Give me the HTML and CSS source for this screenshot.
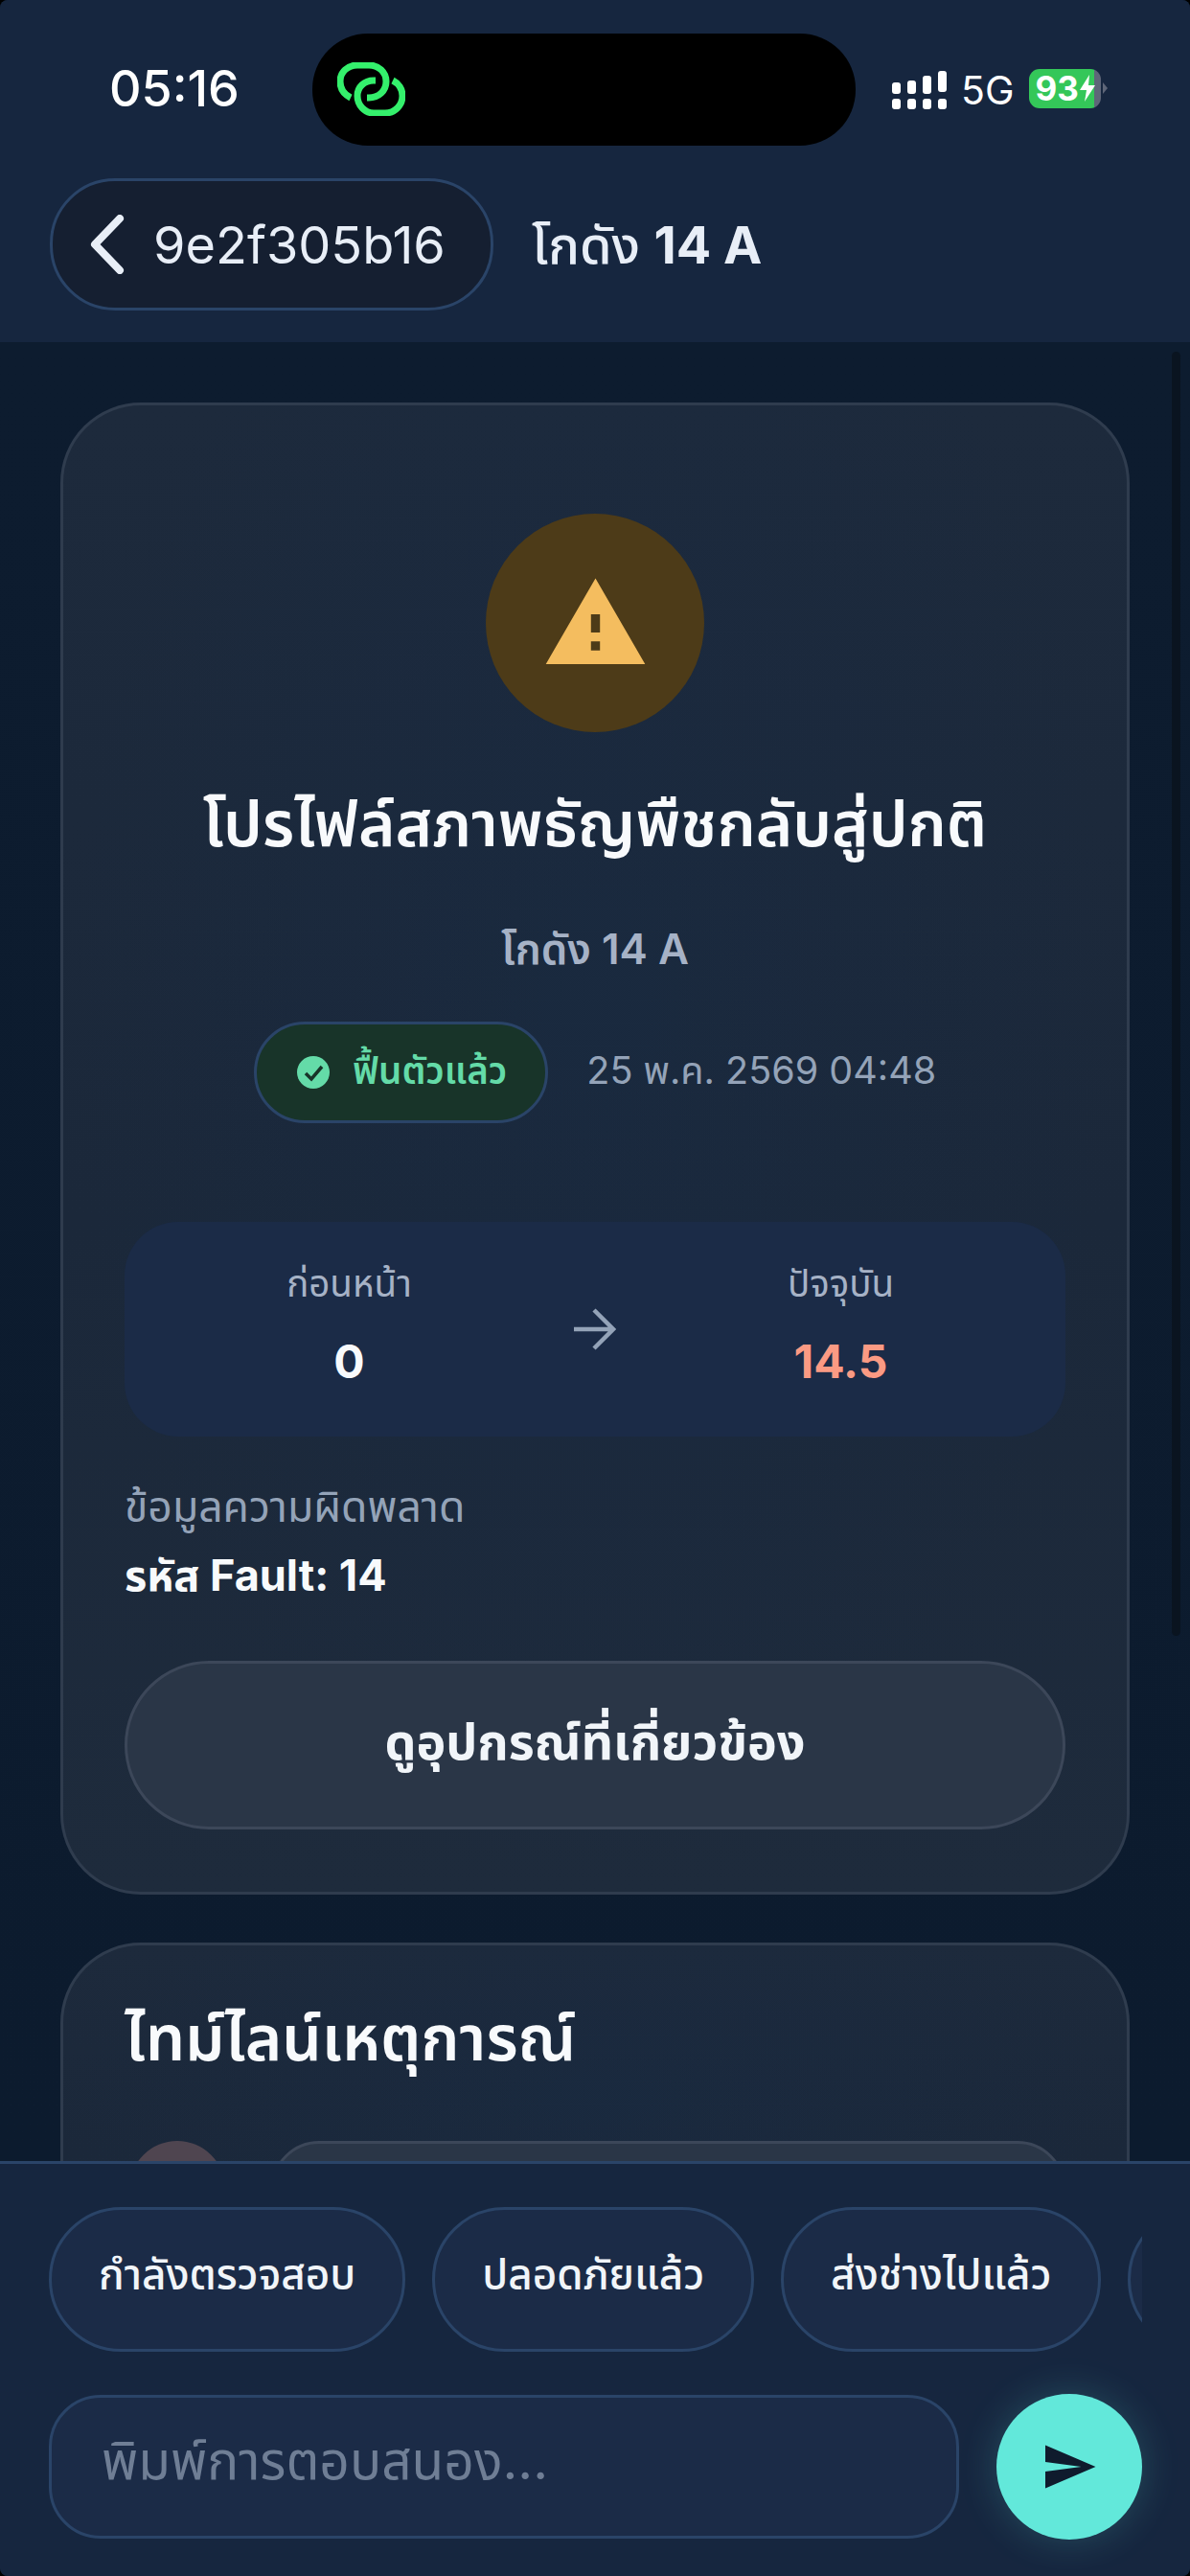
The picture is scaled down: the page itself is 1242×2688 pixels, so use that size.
FILE: index.html
```html
<!doctype html>
<html lang="th">

<head>
    <meta charset="utf-8">
    <meta name="viewport" content="width=device-width, initial-scale=1.0">
    <title>โกดัง 14 A</title>
    <link rel="stylesheet" href="styles.css">
</head>

<body>
    <div id="screen">
        <!-- Header + status bar -->
        <header id="top-bar">
            <div id="status-bar">
                <span class="clock">05:16</span>
                <div class="island">
                    <svg class="link-icon" viewBox="0 0 71 56" fill="none" stroke="#34f06c" stroke-width="7">
                        <path d="M14 37C6 33 3 27 3 20 3 10 11 3 21 3H33C43 3 51 10 51 20 51 30 43 37 33 37H31" />
                        <path d="M40 19H38C28 19 21 26 21 35 21 45 29 53 38 53H50C60 53 68 45 68 35 68 28 64 22 58 19" />
                    </svg>
                </div>
                <div class="status-right">
                    <svg class="signal" viewBox="0 0 58 40" fill="#fff">
                        <rect x="0" y="12" width="9" height="12" rx="3" />
                        <rect x="16" y="10" width="9" height="14" rx="3" />
                        <rect x="32" y="5" width="9" height="19" rx="3" />
                        <rect x="48" y="0" width="9" height="22" rx="3" />
                        <rect x="0" y="29" width="9" height="11" rx="3" />
                        <rect x="16" y="29" width="9" height="11" rx="3" />
                        <rect x="32" y="29" width="9" height="11" rx="3" />
                        <rect x="48" y="29" width="9" height="11" rx="3" />
                    </svg>
                    <span class="net">5G</span>
                    <div class="battery">
                        <span>93</span>
                        <svg viewBox="0 0 16 28" fill="#fff">
                            <path d="M10 0 0 16H7L5 28 16 11H9z" />
                        </svg>
                    </div>
                    <i class="battery-nub"></i>
                </div>
            </div>
            <div id="nav-row">
                <button class="back-pill">
                    <svg viewBox="0 0 40 62" fill="none" stroke="#e8eef7" stroke-width="8" stroke-linecap="round" stroke-linejoin="round">
                        <path d="M33 4 7 31 33 58" />
                    </svg>
                    <span>9e2f305b16</span>
                </button>
                <div class="nav-title">โกดัง <b>14 A</b></div>
            </div>
        </header>

        <!-- Scrolling content -->
        <main id="content">
            <section class="card alert-card">
                <div class="alert-icon">
                    <svg viewBox="0 0 24 24" fill="#f4bd5f">
                        <path d="M1 21h22L12 2 1 21zm12-3h-2v-2h2v2zm0-4h-2v-4h2v4z" />
                    </svg>
                </div>
                <h1>โปรไฟล์สภาพธัญพืชกลับสู่ปกติ</h1>
                <div class="sub-title">โกดัง 14 A</div>
                <div class="meta-row">
                    <div class="badge">
                        <svg viewBox="0 0 34 34">
                            <circle cx="17" cy="17" r="17" fill="#64dba8" />
                            <path d="M9 18l6 6 11-13" fill="none" stroke="#183429" stroke-width="3.5" />
                        </svg>
                        <span>ฟื้นตัวแล้ว</span>
                    </div>
                    <span class="date">25 พ.ค. 2569 04:48</span>
                </div>

                <div class="change-box">
                    <div class="change-col">
                        <div class="change-label">ก่อนหน้า</div>
                        <div class="change-value">0</div>
                    </div>
                    <svg class="change-arrow" viewBox="0 0 44 44" fill="none" stroke="#94a3b8" stroke-width="4.5">
                        <path d="M0 22H41M21 2 41 22 21 42" />
                    </svg>
                    <div class="change-col">
                        <div class="change-label">ปัจจุบัน</div>
                        <div class="change-value hot">14.5</div>
                    </div>
                </div>

                <div class="fault-label">ข้อมูลความผิดพลาด</div>
                <div class="fault-value">รหัส Fault: 14</div>

                <button class="wide-btn">ดูอุปกรณ์ที่เกี่ยวข้อง</button>
            </section>

            <section class="card timeline-card">
                <h2>ไทม์ไลน์เหตุการณ์</h2>
                <div class="timeline-row">
                    <div class="avatar"></div>
                    <div class="bubble"></div>
                </div>
            </section>
            <div class="scroll-thumb"></div>
        </main>

        <!-- Reply bar -->
        <footer id="reply-bar">
            <div class="chips">
                <button class="chip">กำลังตรวจสอบ</button>
                <button class="chip">ปลอดภัยแล้ว</button>
                <button class="chip">ส่งช่างไปแล้ว</button>
                <button class="chip chip-empty"></button>
            </div>
            <div class="input-row">
                <div class="reply-input">พิมพ์การตอบสนอง...</div>
                <button class="send-btn">
                    <svg viewBox="0 0 24 24" fill="#0f1b2d">
                        <path d="M2.01 21 23 12 2.01 3 2 10l15 2-15 2z" />
                    </svg>
                </button>
            </div>
        </footer>
    </div>
</body>

</html>
```

FILE: styles.css
```css
* {
    box-sizing: border-box;
}

html,
body {
    margin: 0;
    padding: 0;
    background-color: #000;
}

body {
    font-family: 'Inter', 'Noto Sans', 'Noto Sans Thai', 'DejaVu Sans', sans-serif;
    color: #f1f5f9;
}

button {
    font-family: inherit;
    color: inherit;
    cursor: pointer;
}

#screen {
    width: 1242px;
    height: 2688px;
    display: flex;
    flex-direction: column;
    overflow: hidden;
    border-radius: 8px;
    background: #0d1c2f;
}

/***** header *****/
#top-bar {
    height: 357px;
    flex: none;
    background-color: #16263f;
}

#status-bar {
    height: 186px;
    padding-top: 35px;
    display: flex;
    align-items: flex-start;
}

.clock {
    width: 326px;
    height: 117px;
    padding-left: 114px;
    line-height: 115px;
    font-size: 52px;
    font-weight: 500;
    color: #fff;
}

.island {
    width: 567px;
    height: 117px;
    border-radius: 58px;
    background-color: #000;
    display: flex;
    align-items: center;
    padding-left: 26px;
}

.link-icon {
    width: 71px;
    height: 56px;
    margin-top: -1px;
}

.status-right {
    flex: 1;
    height: 117px;
    display: flex;
    align-items: center;
    padding-left: 38px;
}

.signal {
    width: 58px;
    height: 40px;
}

.net {
    margin-left: 14px;
    font-size: 41px;
    color: #fff;
}

.battery {
    width: 75px;
    height: 41px;
    margin-left: 15px;
    margin-top: -3px;
    border-radius: 11px;
    background: linear-gradient(90deg, #34c759 91%, #5e6678 91%);
    display: flex;
    align-items: center;
    padding-left: 7px;
    font-size: 35px;
    font-weight: 700;
    color: #fff;
}

.battery svg {
    width: 16px;
    height: 28px;
    margin-left: 1px;
}

.battery-nub {
    width: 0;
    height: 0;
    margin-left: 2px;
    margin-top: -3px;
    border-left: 5px solid #5e6678;
    border-top: 6px solid transparent;
    border-bottom: 6px solid transparent;
}

#nav-row {
    display: flex;
    align-items: center;
    padding-left: 52px;
    gap: 40px;
}

.back-pill {
    width: 463px;
    height: 138px;
    display: flex;
    align-items: center;
    gap: 28px;
    padding: 0 0 0 37px;
    border: 3px solid #2a4468;
    border-radius: 68px;
    background-color: #151f31;
    font-size: 54px;
    color: #e8eef7;
}

.back-pill svg {
    width: 40px;
    height: 62px;
}

.nav-title {
    padding-top: 6px;
    font-size: 54px;
    font-weight: 500;
    color: #e8eef7;
}

.nav-title b {
    font-weight: 700;
}

/***** content *****/
#content {
    position: relative;
    flex: 1;
    min-height: 0;
    overflow: hidden;
    padding: 63px 63px 0;
    background: linear-gradient(180deg, #0d1c2f, #0c1b2e);
}

.scroll-thumb {
    position: absolute;
    top: 10px;
    right: 10px;
    width: 9px;
    height: 1340px;
    border-radius: 5px;
    background-color: #0a1420;
}

.card {
    border: 3px solid #2f3c4e;
    border-radius: 84px;
    background:
        radial-gradient(ellipse at 50% 40%, rgba(24, 42, 66, 0.55), rgba(24, 42, 66, 0) 70%),
        linear-gradient(180deg, #1d2a3c, #1b283a 55%, #1e2b3c);
    padding: 0 64px;
}

.alert-card {
    height: 1557px;
    padding-top: 113px;
}

.alert-icon {
    width: 228px;
    height: 228px;
    margin: 0 auto;
    border-radius: 50%;
    background-color: #4d3b18;
    display: flex;
    align-items: center;
    justify-content: center;
}

.alert-icon svg {
    width: 113px;
    height: 113px;
}

h1 {
    margin: 46px 0 0;
    font-size: 65.5px;
    line-height: 100px;
    font-weight: 600;
    text-align: center;
    color: #f8fafc;
}

.sub-title {
    margin-top: 50px;
    font-size: 44px;
    line-height: 60px;
    font-weight: 600;
    text-align: center;
    color: #a6b2c6;
}

.meta-row {
    display: flex;
    align-items: center;
    justify-content: center;
    gap: 40px;
    margin-top: 46px;
}

.badge {
    height: 106px;
    padding: 0 40px 0 42px;
    display: flex;
    align-items: center;
    gap: 24px;
    border: 3px solid #2a4468;
    border-radius: 53px;
    background-color: #183429;
    font-size: 38.5px;
    font-weight: 600;
    color: #64dba8;
}

.badge svg {
    width: 34px;
    height: 34px;
}

.date {
    font-size: 39.5px;
    color: #94a3b8;
}

.change-box {
    height: 224px;
    margin-top: 103px;
    display: flex;
    align-items: center;
    border-radius: 56px;
    background-color: #1b2b47;
}

.change-col {
    flex: 1;
    padding-bottom: 9px;
    text-align: center;
}

.change-label {
    font-size: 38.5px;
    line-height: 50px;
    color: #a6b2c6;
}

.change-value {
    margin-top: 27px;
    font-size: 48px;
    line-height: 60px;
    font-weight: 700;
    color: #f8fafc;
}

.change-value.hot {
    color: #fb9a83;
}

.change-arrow {
    width: 44px;
    height: 44px;
}

.fault-label {
    margin-top: 48px;
    font-size: 44.5px;
    line-height: 50px;
    color: #94a3b8;
}

.fault-value {
    margin-top: 22px;
    font-size: 45px;
    line-height: 50px;
    font-weight: 700;
    color: #f8fafc;
}

.wide-btn {
    display: block;
    width: 100%;
    height: 176px;
    margin-top: 64px;
    padding-bottom: 4px;
    border: 3px solid #3c4759;
    border-radius: 88px;
    background-color: #2a3647;
    font-size: 52px;
    font-weight: 700;
    color: #f1f5f9;
}

.timeline-card {
    height: 400px;
    margin-top: 50px;
    padding-top: 52px;
}

h2 {
    margin: 0;
    font-size: 65.5px;
    line-height: 90px;
    font-weight: 600;
    color: #f8fafc;
}

.timeline-row {
    display: flex;
    gap: 48px;
    margin-top: 62px;
    margin-left: 5px;
}

.avatar {
    width: 100px;
    height: 100px;
    flex: none;
    border-radius: 50%;
    background-color: #4f4550;
}

.bubble {
    width: 829px;
    height: 200px;
    border: 3px solid #3c4759;
    border-radius: 50px;
    background-color: #2a3647;
}

/***** reply bar *****/
#reply-bar {
    height: 433px;
    flex: none;
    padding: 45px 50px 0 51px;
    border-top: 3px solid #2a4468;
    background-color: #16263f;
}

.chips {
    display: flex;
    gap: 28px;
    overflow: hidden;
}

.chip {
    flex: none;
    height: 151px;
    padding: 0 49px 6px;
    border: 3px solid #2a4468;
    border-radius: 76px;
    background-color: #1b2b47;
    font-size: 44px;
    font-weight: 500;
    color: #f1f5f9;
    white-space: nowrap;
}

.chip-empty {
    width: 300px;
}

.input-row {
    display: flex;
    align-items: center;
    gap: 39px;
    margin-top: 44px;
}

.reply-input {
    flex: 1;
    height: 150px;
    padding: 0 0 8px 52px;
    border: 3px solid #2a4468;
    border-radius: 54px;
    background-color: #1b2b47;
    display: flex;
    align-items: center;
    font-size: 55px;
    color: #6f7e95;
}

.send-btn {
    width: 152px;
    height: 152px;
    flex: none;
    border: none;
    border-radius: 50%;
    padding: 0;
    background-color: #62e8da;
    box-shadow: 0 0 40px rgba(98, 232, 218, 0.2);
    display: flex;
    align-items: center;
    justify-content: center;
}

.send-btn svg {
    width: 60px;
    height: 60px;
}
```
